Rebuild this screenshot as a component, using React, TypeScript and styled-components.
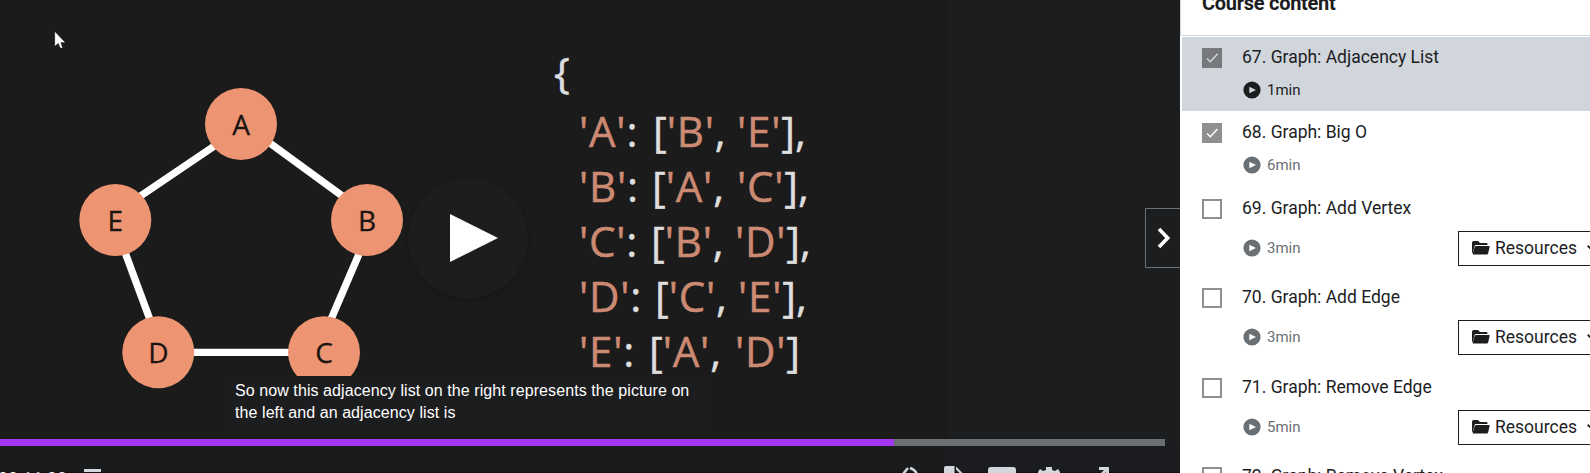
import React from "react";
import styled, { createGlobalStyle } from "styled-components";

const Global = createGlobalStyle`
  * { box-sizing: border-box; }
  body { margin: 0; overflow: hidden; background: #fff; }
`;

const Page = styled.div`
  display: flex;
  width: 1590px;
  height: 473px;
  overflow: hidden;
  font-family: Roboto, "Liberation Sans", sans-serif;
`;

const Player = styled.main`
  position: relative;
  display: flex;
  flex-direction: column;
  width: 1180px;
  height: 473px;
  overflow: hidden;
  background: #1c1d1f;
`;

const Slide = styled.section`
  display: flex;
  width: 948px;
  height: 439px;
  flex: none;
  background: #1b1b1b;
`;

const Graph = styled.svg`
  display: block;
  width: 551px;
  height: 439px;
  flex: none;
`;

const Code = styled.div`
  padding-top: 45px;
  color: #dedede;
  font: 42px/55px "Open Sans", sans-serif;
  -webkit-text-stroke: 0.5px currentColor;
  white-space: pre;
`;

const Brace = styled.div`
  height: 58px;
  padding-left: 3px;
  line-height: 53px;
`;

const CodeLine = styled.div`
  display: flex;
  height: 55px;
  padding-left: 28px;
`;

const Part = styled.span<{ $w: number }>`
  flex: none;
  width: ${(p) => p.$w}px;
`;

const Str = styled.span`
  color: #cc8a72;
  letter-spacing: 0.8px;
`;

const PlayButton = styled.button`
  position: absolute;
  left: 408px;
  top: 178px;
  display: flex;
  width: 120px;
  height: 120px;
  padding: 0;
  border: 0;
  border-radius: 50%;
  background: #1c1d1f;
  box-shadow: 0 2px 8px rgba(0, 0, 0, 0.22);
`;

const Caption = styled.div`
  position: absolute;
  left: 225px;
  top: 376px;
  width: 486px;
  height: 50px;
  padding: 4px 10px 2px;
  background: #1c1d1f;
  color: #fff;
  font: 16px/22px "Liberation Sans", Arial, sans-serif;
  letter-spacing: 0.08px;
`;

const Cursor = styled.svg`
  position: absolute;
  left: 54px;
  top: 30px;
`;

const Track = styled.div`
  width: 1165px;
  height: 7px;
  flex: none;
  background: #6a6f73;
`;

const Played = styled.div`
  width: 894px;
  height: 7px;
  background: #a435f0;
`;

const Controls = styled.div`
  display: flex;
  height: 27px;
  padding-top: 20px;
  background: linear-gradient(90deg, #1a1b1c 948px, #1b1c1f 948px);
  box-shadow: inset 0 -1px #150d15;
`;

const Time = styled.span`
  width: 84px;
  height: 7px;
  padding-top: 2px;
  margin-left: -2px;
  margin-right: 2px;
  overflow: hidden;
  color: #fff;
  font-size: 17.5px;
  font-weight: 500;
  line-height: 22px;
  white-space: nowrap;
`;

const ControlIcons = styled.svg`
  display: block;
  width: 1096px;
  height: 7px;
  overflow: hidden;
`;

const Toggle = styled.button`
  position: absolute;
  right: 0;
  top: 208px;
  display: flex;
  align-items: center;
  width: 35px;
  height: 60px;
  padding: 0 0 0 11px;
  border: 1px solid #6a6f73;
  border-right: 0;
  background: #1c1d1f;
`;

const Sidebar = styled.aside`
  width: 410px;
  height: 473px;
  overflow: hidden;
  color: #1c1d1f;
  background: #fff;
`;

const SidebarHeader = styled.header`
  display: flex;
  align-items: flex-end;
  height: 36px;
  padding: 0 0 20px 21px;
  border-left: 1px solid #d1d7dc;
  border-bottom: 1px solid #d1d7dc;
  font-size: 20px;
  font-weight: 700;
  letter-spacing: -0.28px;
  line-height: 24px;
`;

const Lessons = styled.ul`
  margin: 1px 0 0 2px;
  padding: 0;
  list-style: none;
`;

const Lesson = styled.li<{ $active?: boolean; $h: number }>`
  display: flex;
  height: ${(p) => p.$h}px;
  margin-bottom: ${(p) => (p.$active ? 1 : 0)}px;
  padding: 11px 0 0 20px;
  background: ${(p) => (p.$active ? "#d1d5dc" : "#fff")};
`;

const Check = styled.span<{ $state: "active" | "done" | "open" }>`
  display: flex;
  flex: none;
  width: 20px;
  height: 20px;
  border: ${(p) => (p.$state === "open" ? "2px solid #8f8f8f" : "0")};
  background: ${(p) => ({ active: "#77797d", done: "#8f8f8f", open: "#fff" })[p.$state]};
`;

const LessonBody = styled.div`
  flex: 1;
  padding-left: 20px;
`;

const LessonTitle = styled.div`
  height: 25px;
  margin-top: -3px;
  font-size: 17.5px;
  font-weight: 400;
  line-height: 25px;
  white-space: nowrap;
`;

const Meta = styled.div<{ $tall: boolean }>`
  display: flex;
  align-items: center;
  height: 35px;
  margin-top: ${(p) => (p.$tall ? 10 : 2)}px;
`;

const Duration = styled.div<{ $active: boolean; $raised: boolean }>`
  display: flex;
  align-items: center;
  gap: 6px;
  width: 216px;
  padding-left: 1px;
  padding-bottom: ${(p) => (p.$raised ? 2 : 0)}px;
  color: ${(p) => (p.$active ? "#1c1d1f" : "#6a6f73")};
  font-size: 15px;
  font-weight: 400;
`;

const Resources = styled.button`
  display: flex;
  align-items: center;
  flex: none;
  width: 160px;
  height: 35px;
  padding: 0 0 1px 12px;
  border: 1px solid #1c1d1f;
  background: #fff;
  color: #1c1d1f;
  font: 400 17.5px/24px Roboto, sans-serif;

  span { margin-left: 5px; width: 92px; text-align: left; }
`;

const nodes = [
  { id: "A", x: 241, y: 124 },
  { id: "B", x: 367, y: 220 },
  { id: "C", x: 324, y: 352.3 },
  { id: "D", x: 158.3, y: 352.3 },
  { id: "E", x: 115.3, y: 220 },
];

const edges = [
  [241, 122, 367, 214],
  [373.6, 220, 317, 352],
  [158, 352.3, 324, 352.3],
  [162, 352, 113, 220],
  [105, 220, 241, 128],
];

const code = [
  { key: "A", a: "B", b: "E", end: ",", w: [74, 84] },
  { key: "B", a: "A", b: "C", end: ",", w: [73, 85] },
  { key: "C", a: "B", b: "D", end: ",", w: [72, 84] },
  { key: "D", a: "C", b: "E", end: ",", w: [76, 83] },
  { key: "E", a: "A", b: "D", end: "", w: [70, 86] },
];

type LessonData = {
  title: string;
  time: string;
  state: "active" | "done" | "open";
  h: number;
  resources?: boolean;
};

const lessons: LessonData[] = [
  { title: "67. Graph: Adjacency List", time: "1min", state: "active", h: 74 },
  { title: "68. Graph: Big O", time: "6min", state: "done", h: 76 },
  { title: "69. Graph: Add Vertex", time: "3min", state: "open", h: 89, resources: true },
  { title: "70. Graph: Add Edge", time: "3min", state: "open", h: 90, resources: true },
  { title: "71. Graph: Remove Edge", time: "5min", state: "open", h: 89, resources: true },
  { title: "72. Graph: Remove Vertex", time: "4min", state: "open", h: 89, resources: true },
];

const PlayDot = ({ hole }: { hole: string }) => (
  <svg width="18" height="18" viewBox="0 0 18 18">
    <circle cx="9" cy="9" r="8.6" fill="currentColor" />
    <path d="M6.3 5.7 13 9l-6.7 3.3z" fill={hole} />
  </svg>
);

const Folder = () => (
  <svg width="19" height="16" viewBox="0 0 19 16" fill="#1c1d1f">
    <path d="M1 12.8V2.7Q1 1 2.7 1H7l2 2h6.2q1.3 0 1.3 1.3V5H5Q3.8 5 3.5 6.2L1.7 13z" />
    <path d="M5.4 6H18q.9 0 .7.8l-1.6 6.8q-.3 1-1.3 1H2.5q-1 0-.8-.9l2-6.6Q4 6 5.4 6z" />
  </svg>
);

export default function App() {
  return (
    <>
      <Global />
      <Page>
        <Player>
          <Slide>
            <Graph viewBox="0 0 551 439">
              <g stroke="#fff" strokeWidth="7.3">
                {edges.map(([x1, y1, x2, y2]) => (
                  <line key={`${x1}-${x2}`} x1={x1} y1={y1} x2={x2} y2={y2} />
                ))}
              </g>
              {nodes.map((n) => (
                <g key={n.id}>
                  <circle cx={n.x} cy={n.y} r="36" fill="#ed9473" />
                  <text
                    x={n.x}
                    y={n.y + 11}
                    textAnchor="middle"
                    fontFamily="Open Sans, sans-serif"
                    fontSize="28"
                    fill="#1b1512"
                    stroke="#1b1512"
                    strokeWidth=".3"
                  >
                    {n.id}
                  </text>
                </g>
              ))}
            </Graph>
            <Code>
              <Brace>{"{"}</Brace>
              {code.map((l) => (
                <CodeLine key={l.key}>
                  <Part $w={l.w[0]}>
                    <Str>{`'${l.key}'`}</Str>:
                  </Part>
                  <Part $w={l.w[1]}>
                    [<Str>{`'${l.a}'`}</Str>,
                  </Part>
                  <span>
                    <Str>{`'${l.b}'`}</Str>]{l.end}
                  </span>
                </CodeLine>
              ))}
            </Code>
          </Slide>
          <Track>
            <Played />
          </Track>
          <Controls>
            <Time>00:11:28</Time>
            <ControlIcons viewBox="84 466 1096 7">
              <path fill="#d1d7dc" d="M84 469h17v3H84z" />
              <g fill="#d1d7dc">
                <path d="M944 468q0-2 2-2h8.5v12H944zM956 466.5l7 7h-3l-4-4z" />
                <path d="M988 470q0-3 3-3h22q3 0 3 3v8h-28z" />
                <path d="M1046 467h6v3l3 1 3-2 2 3v4h-22v-4l2-3 3 2 3-1z" />
                <path d="M1099 467h10v8h-3v-3l-3 3-2-2 3-3h-5z" />
              </g>
              <g fill="none" stroke="#d1d7dc" strokeWidth="2.5">
                <path d="m903 474 5-6M910 468q6 2 7 7" />
              </g>
            </ControlIcons>
          </Controls>
          <Cursor width="14" height="20" viewBox="0 0 14 20">
            <path
              d="M.8 1.5v14.8l3.4-3.1L6.4 18h2.2l-1.8-5.6h4.4z"
              fill="#fff"
              stroke="#0c0c14"
              strokeWidth=".3"
            />
          </Cursor>
          <PlayButton>
            <svg width="120" height="120" viewBox="0 0 120 120">
              <path d="M42 36v48l48-24z" fill="#fff" />
            </svg>
          </PlayButton>
          <Caption>
            So now this adjacency list on the right represents the picture on the left and an
            adjacency list is
          </Caption>
          <Toggle>
            <svg width="14" height="22" viewBox="0 0 14 22">
              <path d="m2 2 8.7 9L2 20" fill="none" stroke="#fff" strokeWidth="3.6" />
            </svg>
          </Toggle>
        </Player>
        <Sidebar>
          <SidebarHeader>Course content</SidebarHeader>
          <Lessons>
            {lessons.map((l) => (
              <Lesson key={l.title} $active={l.state === "active"} $h={l.h}>
                <Check $state={l.state}>
                  {l.state !== "open" && (
                    <svg width="20" height="20" viewBox="0 0 20 20">
                      <path
                        d="m5 10.5 3.3 3.2L15.5 6"
                        fill="none"
                        stroke={l.state === "active" ? "#d1d7dc" : "#fff"}
                        strokeWidth="1.5"
                      />
                    </svg>
                  )}
                </Check>
                <LessonBody>
                  <LessonTitle>{l.title}</LessonTitle>
                  <Meta $tall={!!l.resources}>
                    <Duration $active={l.state === "active"} $raised={!!l.resources}>
                      <PlayDot hole={l.state === "active" ? "#d1d7dc" : "#fff"} />
                      {l.time}
                    </Duration>
                    {l.resources && (
                      <Resources>
                        <Folder />
                        <span>Resources</span>
                        <svg width="9" height="6" viewBox="0 0 12 8">
                          <path d="m1 1 5 5 5-5" fill="none" stroke="#1c1d1f" strokeWidth="2.4" />
                        </svg>
                      </Resources>
                    )}
                  </Meta>
                </LessonBody>
              </Lesson>
            ))}
          </Lessons>
        </Sidebar>
      </Page>
    </>
  );
}
